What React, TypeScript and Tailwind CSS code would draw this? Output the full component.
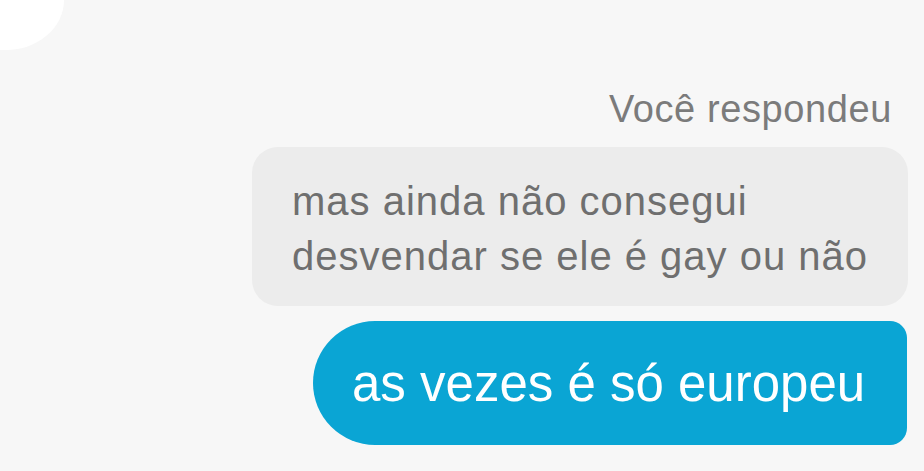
const font = { fontFamily: '"Liberation Sans", Arial, sans-serif' };

const IncomingTail = () => (
    <div className="h-[50px] w-[64px] bg-white rounded-br-[58px_50px]" />
);

const ReplyLabel = ({ text }: { text: string }) => (
    <p className="mt-[37px] pr-[32px] text-[38px] leading-[44px] tracking-[0.6px] text-[#7b7b7b]">{text}</p>
);

const QuotedBubble = ({ text }: { text: string }) => (
    <div className="mt-[16px] mr-[16px] w-[656px] rounded-[26px] bg-[#ececec] pl-[40px] pr-[36px] pt-[27px] pb-[22px]">
        <p className="text-[40px] leading-[55px] tracking-[1px] text-[#6f6f6f]">{text}</p>
    </div>
);

const SentBubble = ({ text }: { text: string }) => (
    <div className="mt-[15px] mr-[17px] h-[124px] w-[594px] rounded-l-[62px] rounded-r-[17px] bg-[#0aa5d4] pl-[39px] pt-[2px]">
        <p className="text-[51px] leading-[122px] text-white whitespace-nowrap">{text}</p>
    </div>
);

export default function App() {
    return (
        <div style={font} className="h-[471px] w-[924px] overflow-hidden bg-[#f7f7f7]">
            <IncomingTail />
            <div className="flex flex-col items-end">
                <ReplyLabel text="Você respondeu" />
                <QuotedBubble text="mas ainda não consegui desvendar se ele é gay ou não" />
                <SentBubble text="as vezes é só europeu" />
            </div>
        </div>
    );
}
